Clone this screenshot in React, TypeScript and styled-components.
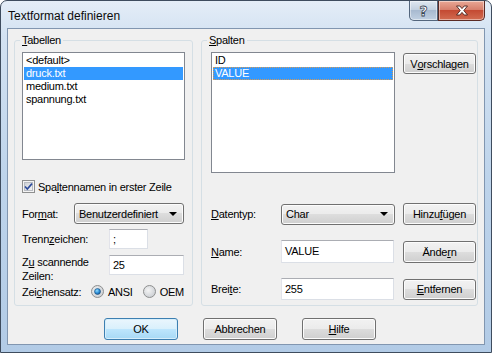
import React from "react";
import styled, { createGlobalStyle } from "styled-components";

const GlobalStyle = createGlobalStyle`
  html, body {
    margin: 0;
    padding: 0;
    background: #fff;
    overflow: hidden;
  }
  body {
    font-family: "Liberation Sans", Tahoma, Arial, sans-serif;
    font-size: 11px;
    letter-spacing: -0.25px;
    color: #000;
  }
  * {
    box-sizing: border-box;
  }
  svg {
    flex-shrink: 0;
  }
`;

const Window = styled.div`
  width: 492px;
  height: 353px;
  border: 1px solid #3e4c5e;
  border-radius: 7px 7px 0 0;
  background: linear-gradient(180deg, #e4edf7 0%, #d3e2f2 10%, #bed4eb 50%, #b2cbe6 100%);
  padding: 0 6px 7px;
  display: flex;
  flex-direction: column;
`;

const TitleBar = styled.div`
  height: 27px;
  display: flex;
  align-items: flex-start;
`;

const Title = styled.div`
  font-family: "Liberation Sans", Arial, sans-serif;
  font-size: 12px;
  letter-spacing: 0;
  padding: 8px 0 0 1px;
  color: #0b0b0b;
`;

const CaptionButtons = styled.div`
  margin-left: auto;
  display: flex;
`;

const CaptionButton = styled.div<{ $close?: boolean }>`
  height: 20px;
  width: ${(p) => (p.$close ? 47 : 29)}px;
  border: 1px solid ${(p) => (p.$close ? "#5a2a24" : "#53667d")};
  border-top: none;
  border-radius: ${(p) => (p.$close ? "0 0 5px 0" : "0 0 0 5px")};
  background: ${(p) =>
    p.$close
      ? "linear-gradient(180deg, #e9a896 0%, #d7806d 45%, #c44a33 50%, #d26c51 100%)"
      : "linear-gradient(180deg, #dfe7f0 0%, #c3d1e0 45%, #a8bad0 50%, #c0d0e2 100%)"};
  box-shadow: inset 0 0 0 1px rgba(255, 255, 255, 0.45);
  display: flex;
  align-items: center;
  justify-content: center;
`;

const HelpGlyph = styled.span`
  font-family: "DejaVu Sans", sans-serif;
  font-weight: bold;
  font-size: 14px;
  color: #fff;
  -webkit-text-stroke: 0.8px #3b4756;
  line-height: 1;
`;

const Client = styled.div`
  flex: 1;
  background: #f0f0f0;
  border: 1px solid #8196b0;
  display: flex;
  flex-direction: column;
`;

const Groups = styled.div`
  display: flex;
  gap: 8px;
  padding: 5px 6px 0 6px;
`;

const GroupBox = styled.fieldset<{ $width: number }>`
  margin: 0;
  padding: 0;
  width: ${(p) => p.$width}px;
  height: 272px;
  min-width: 0;
  border: 1px solid #d5dfe5;
  border-radius: 3px;
`;

const Legend = styled.legend`
  margin-left: 5px;
  padding: 0 2px;
  line-height: 13px;
  font-size: 11px;
`;

const Key = styled.span`
  text-decoration: underline;
`;

const LeftBody = styled.div`
  padding: 5px 7px 0 7px;
  display: flex;
  flex-direction: column;
`;

const RightBody = styled.div`
  padding: 5px 9px 0 9px;
  display: grid;
  grid-template-columns: 62px 114px 73px;
  column-gap: 8px;
  grid-template-rows: 136px 22px 23px 22px;
  row-gap: 15px;
  align-items: center;
`;

const ListBox = styled.div<{ $height: number; $span?: boolean }>`
  height: ${(p) => p.$height}px;
  background: #fff;
  border: 1px solid #828790;
  padding: 1px;
  align-self: stretch;
  ${(p) => (p.$span ? "grid-column: 1 / 3; align-self: start;" : "")}
`;

const ListItem = styled.div<{ $selected?: boolean; $focused?: boolean }>`
  height: 13px;
  line-height: 13px;
  padding-left: 2px;
  white-space: nowrap;
  background: ${(p) => (p.$selected ? "#3399ff" : "transparent")};
  color: ${(p) => (p.$selected ? "#fff" : "#000")};
  outline: ${(p) => (p.$focused ? "1px dotted #d89a52" : "none")};
  outline-offset: -1px;
`;

const Button = styled.div<{ $default?: boolean; $width?: number; $height?: number }>`
  width: ${(p) => p.$width ?? 73}px;
  height: ${(p) => p.$height ?? 22}px;
  border: 1px solid ${(p) => (p.$default ? "#3c7fb1" : "#707070")};
  border-radius: 3px;
  background: ${(p) =>
    p.$default
      ? "linear-gradient(180deg, #eaf6fd 0%, #d9f0fc 50%, #bee6fd 50%, #a7d9f5 100%)"
      : "linear-gradient(180deg, #f2f2f2 0%, #ebebeb 50%, #dddddd 50%, #cfcfcf 100%)"};
  box-shadow: inset 0 0 0 1px ${(p) => (p.$default ? "#d6eefb" : "#fcfcfc")};
  display: flex;
  align-items: center;
  justify-content: center;
  white-space: nowrap;
`;

const TopButton = styled(Button)`
  align-self: start;
  margin-top: 1px;
`;

const Select = styled.div<{ $width: number }>`
  width: ${(p) => p.$width}px;
  height: 21px;
  border: 1px solid #707070;
  border-radius: 3px;
  background: linear-gradient(180deg, #f2f2f2 0%, #ebebeb 50%, #dddddd 50%, #cfcfcf 100%);
  box-shadow: inset 0 0 0 1px #fcfcfc;
  display: flex;
  align-items: center;
  padding: 0 6px 0 4px;
`;

const SelectText = styled.span`
  flex: 1;
`;

const Arrow = styled.span`
  width: 0;
  height: 0;
  border-left: 4px solid transparent;
  border-right: 4px solid transparent;
  border-top: 4px solid #000;
`;

const TextInput = styled.div<{ $width: number; $height: number; $top?: boolean }>`
  width: ${(p) => p.$width}px;
  height: ${(p) => p.$height}px;
  background: #fff;
  border: 1px solid #dbdfe6;
  border-top-color: #abadb3;
  border-left-color: #e2e3ea;
  padding: 3px 0 0 3px;
  line-height: 13px;
  ${(p) => (p.$top ? "align-self: flex-start;" : "")}
`;

const RightInput = styled(TextInput)`
  padding-top: 4px;
`;

const Row = styled.div<{ $top: number; $height: number }>`
  margin-top: ${(p) => p.$top}px;
  height: ${(p) => p.$height}px;
  display: flex;
  align-items: center;
`;

const Label = styled.span<{ $width: number }>`
  width: ${(p) => p.$width}px;
  flex-shrink: 0;
`;

const TwoLineLabel = styled.span<{ $width: number }>`
  width: ${(p) => p.$width}px;
  flex-shrink: 0;
  line-height: 14px;
  align-self: flex-start;
`;

const CheckText = styled.span`
  margin-left: 3px;
  white-space: nowrap;
`;

const RadioText = styled.span`
  margin-left: 4px;
  margin-right: 10px;
  &:last-child {
    margin-right: 0;
  }
`;

const GridLabel = styled.span``;

const Footer = styled.div`
  display: flex;
  gap: 25px;
  padding-left: 96px;
  margin-top: 12px;
`;

const CheckBox = () => (
  <svg width="13" height="13" viewBox="0 0 13 13">
    <defs>
      <linearGradient id="cbg" x1="0" y1="0" x2="1" y2="1">
        <stop offset="0" stopColor="#cbcfd5" />
        <stop offset="1" stopColor="#f6f6f6" />
      </linearGradient>
    </defs>
    <rect x="0.5" y="0.5" width="12" height="12" fill="#f4f4f4" stroke="#8e8f8f" />
    <rect x="2.5" y="2.5" width="8" height="8" fill="url(#cbg)" stroke="#b9bcc2" />
    <path d="M3 6.5 L5.3 9 L10 3.6" fill="none" stroke="#2c4a9a" strokeWidth="1.6" />
  </svg>
);

const Radio = ({ checked }: { checked?: boolean }) => (
  <svg width="13" height="13" viewBox="0 0 13 13">
    <defs>
      <radialGradient id="rbg" cx="0.4" cy="0.4" r="0.7">
        <stop offset="0" stopColor="#f4f4f4" />
        <stop offset="1" stopColor="#c7cbd0" />
      </radialGradient>
      <radialGradient id="rdot" cx="0.4" cy="0.35" r="0.7">
        <stop offset="0" stopColor="#8fdcff" />
        <stop offset="0.6" stopColor="#2a8ad4" />
        <stop offset="1" stopColor="#0f4f8a" />
      </radialGradient>
    </defs>
    <circle cx="6.5" cy="6.5" r="6" fill="url(#rbg)" stroke="#8e8f8f" />
    {checked && <circle cx="6.5" cy="6.5" r="3" fill="url(#rdot)" stroke="#1c4f7c" strokeWidth="0.6" />}
  </svg>
);

const CloseGlyph = () => (
  <svg width="14" height="11" viewBox="0 0 14 11">
    <path
      d="M1.5 1 H4.8 L7 3.6 L9.2 1 H12.5 L8.8 5.5 L12.5 10 H9.2 L7 7.4 L4.8 10 H1.5 L5.2 5.5 Z"
      fill="#fff"
      stroke="#4a1f1a"
      strokeWidth="0.9"
      strokeLinejoin="round"
    />
  </svg>
);

export default function App() {
  return (
    <>
      <GlobalStyle />
      <Window>
        <TitleBar>
          <Title>Textformat definieren</Title>
          <CaptionButtons>
            <CaptionButton>
              <HelpGlyph>?</HelpGlyph>
            </CaptionButton>
            <CaptionButton $close>
              <CloseGlyph />
            </CaptionButton>
          </CaptionButtons>
        </TitleBar>
        <Client>
          <Groups>
            <GroupBox $width={179}>
              <Legend>
                <Key>T</Key>abellen
              </Legend>
              <LeftBody>
                <ListBox $height={108}>
                  <ListItem>&lt;default&gt;</ListItem>
                  <ListItem $selected>druck.txt</ListItem>
                  <ListItem>medium.txt</ListItem>
                  <ListItem>spannung.txt</ListItem>
                </ListBox>
                <Row $top={20} $height={13}>
                  <CheckBox />
                  <CheckText>
                    Spa<Key>l</Key>tennamen in erster Zeile
                  </CheckText>
                </Row>
                <Row $top={10} $height={21}>
                  <Label $width={52}>
                    For<Key>m</Key>at:
                  </Label>
                  <Select $width={110}>
                    <SelectText>Benutzerdefiniert</SelectText>
                    <Arrow />
                  </Select>
                </Row>
                <Row $top={5} $height={20}>
                  <Label $width={87}>
                    Trenn<Key>z</Key>eichen:
                  </Label>
                  <TextInput $width={39} $height={20}>
                    ;
                  </TextInput>
                </Row>
                <Row $top={6} $height={28}>
                  <TwoLineLabel $width={87}>
                    Z<Key>u</Key> scannende
                    <br />
                    Zeilen:
                  </TwoLineLabel>
                  <TextInput $width={75} $height={20} $top>
                    25
                  </TextInput>
                </Row>
                <Row $top={2} $height={13}>
                  <Label $width={69}>
                    Zei<Key>c</Key>hensatz:
                  </Label>
                  <Radio checked />
                  <RadioText>ANSI</RadioText>
                  <Radio />
                  <RadioText>OEM</RadioText>
                </Row>
              </LeftBody>
            </GroupBox>
            <GroupBox $width={277}>
              <Legend>
                <Key>S</Key>palten
              </Legend>
              <RightBody>
                <ListBox $height={121} $span>
                  <ListItem>ID</ListItem>
                  <ListItem $selected $focused>
                    VALUE
                  </ListItem>
                </ListBox>
                <TopButton $height={21}>
                  V<Key>o</Key>rschlagen
                </TopButton>

                <GridLabel>
                  <Key>D</Key>atentyp:
                </GridLabel>
                <Select $width={114}>
                  <SelectText>Char</SelectText>
                  <Arrow />
                </Select>
                <Button>
                  Hinzu<Key>f</Key>ügen
                </Button>

                <GridLabel>
                  <Key>N</Key>ame:
                </GridLabel>
                <RightInput $width={113} $height={23}>
                  VALUE
                </RightInput>
                <Button>
                  Ände<Key>r</Key>n
                </Button>

                <GridLabel>
                  Brei<Key>t</Key>e:
                </GridLabel>
                <RightInput $width={113} $height={22}>
                  255
                </RightInput>
                <Button $height={21}>
                  <Key>E</Key>ntfernen
                </Button>
              </RightBody>
            </GroupBox>
          </Groups>
          <Footer>
            <Button $default $width={74}>
              OK
            </Button>
            <Button $width={74}>Abbrechen</Button>
            <Button $width={74}>
              <Key>H</Key>ilfe
            </Button>
          </Footer>
        </Client>
      </Window>
    </>
  );
}
